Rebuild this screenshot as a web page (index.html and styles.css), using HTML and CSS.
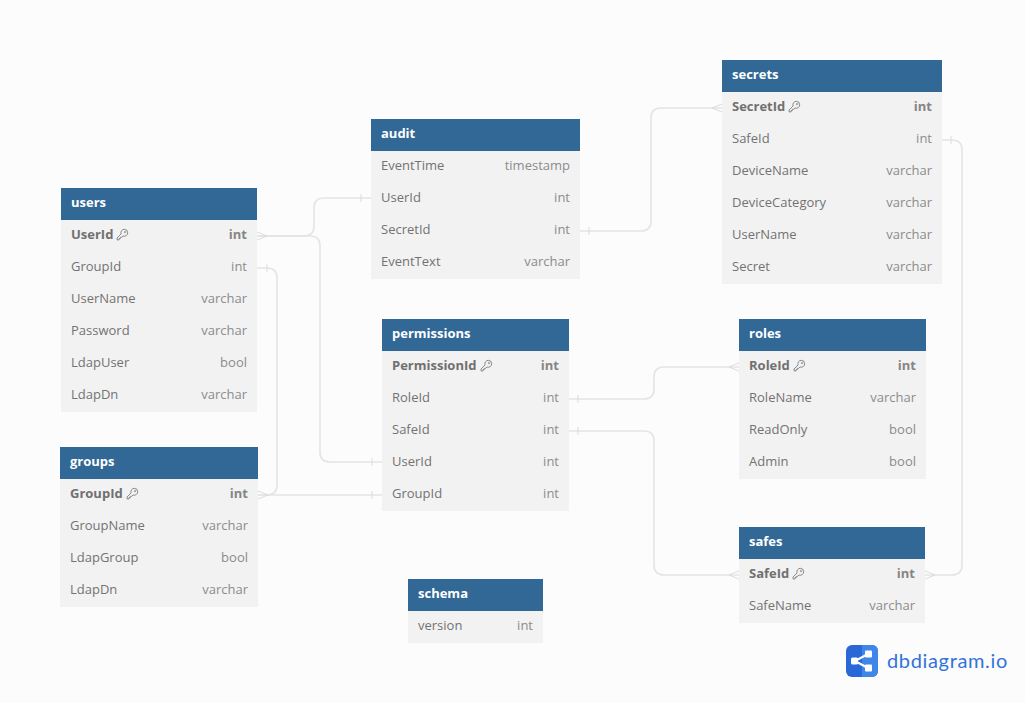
FILE: index.html
```html
<!DOCTYPE html>
<html lang="en">
<head>
<meta charset="utf-8">
<title>dbdiagram</title>
<link rel="stylesheet" href="styles.css">
</head>
<body>
<main class="canvas">
<svg class="links" width="1025" height="703" viewBox="0 0 1025 703" fill="none">
  <g class="link">
    <path d="M257 236H304Q314 236 314 226V208Q314 198 324 198H371"/>
    <path d="M257 236H310Q320 236 320 246V452Q320 462 330 462H382"/>
    <path d="M257 268H267Q277 268 277 278V485Q277 495 267 495H258"/>
    <path d="M258 495H382"/>
    <path d="M580 231H641Q651 231 651 221V118Q651 108 661 108H722"/>
    <path d="M569 399H644Q654 399 654 389V377Q654 367 664 367H739"/>
    <path d="M569 431H644Q654 431 654 441V565Q654 575 664 575H739"/>
    <path d="M942 140H952Q962 140 962 150V565Q962 575 952 575H925"/>
  </g>
  <g class="mark">
    <path d="M361 194V202M372 458V466M372 491V499M267 264V272M589 227V235M578 395V403M578 427V435M951 136V144"/>
    <path d="M257 232L267 236L257 240M258 491L268 495L258 499M925 571L935 575L925 579"/>
    <path d="M722 104L712 108L722 112M739 363L729 367L739 371M739 571L729 575L739 579"/>
  </g>
</svg>

<section class="table t-users">
  <h2>users</h2>
  <div class="row pk"><span class="name">UserId<svg class="key" viewBox="0 0 12 12"><use href="#key"/></svg></span><span class="type">int</span></div>
  <div class="row"><span class="name">GroupId</span><span class="type">int</span></div>
  <div class="row"><span class="name">UserName</span><span class="type">varchar</span></div>
  <div class="row"><span class="name">Password</span><span class="type">varchar</span></div>
  <div class="row"><span class="name">LdapUser</span><span class="type">bool</span></div>
  <div class="row"><span class="name">LdapDn</span><span class="type">varchar</span></div>
</section>

<section class="table t-groups">
  <h2>groups</h2>
  <div class="row pk"><span class="name">GroupId<svg class="key" viewBox="0 0 12 12"><use href="#key"/></svg></span><span class="type">int</span></div>
  <div class="row"><span class="name">GroupName</span><span class="type">varchar</span></div>
  <div class="row"><span class="name">LdapGroup</span><span class="type">bool</span></div>
  <div class="row"><span class="name">LdapDn</span><span class="type">varchar</span></div>
</section>

<section class="table t-audit">
  <h2>audit</h2>
  <div class="row"><span class="name">EventTime</span><span class="type">timestamp</span></div>
  <div class="row"><span class="name">UserId</span><span class="type">int</span></div>
  <div class="row"><span class="name">SecretId</span><span class="type">int</span></div>
  <div class="row"><span class="name">EventText</span><span class="type">varchar</span></div>
</section>

<section class="table t-permissions">
  <h2>permissions</h2>
  <div class="row pk"><span class="name">PermissionId<svg class="key" viewBox="0 0 12 12"><use href="#key"/></svg></span><span class="type">int</span></div>
  <div class="row"><span class="name">RoleId</span><span class="type">int</span></div>
  <div class="row"><span class="name">SafeId</span><span class="type">int</span></div>
  <div class="row"><span class="name">UserId</span><span class="type">int</span></div>
  <div class="row"><span class="name">GroupId</span><span class="type">int</span></div>
</section>

<section class="table t-secrets">
  <h2>secrets</h2>
  <div class="row pk"><span class="name">SecretId<svg class="key" viewBox="0 0 12 12"><use href="#key"/></svg></span><span class="type">int</span></div>
  <div class="row"><span class="name">SafeId</span><span class="type">int</span></div>
  <div class="row"><span class="name">DeviceName</span><span class="type">varchar</span></div>
  <div class="row"><span class="name">DeviceCategory</span><span class="type">varchar</span></div>
  <div class="row"><span class="name">UserName</span><span class="type">varchar</span></div>
  <div class="row"><span class="name">Secret</span><span class="type">varchar</span></div>
</section>

<section class="table t-roles">
  <h2>roles</h2>
  <div class="row pk"><span class="name">RoleId<svg class="key" viewBox="0 0 12 12"><use href="#key"/></svg></span><span class="type">int</span></div>
  <div class="row"><span class="name">RoleName</span><span class="type">varchar</span></div>
  <div class="row"><span class="name">ReadOnly</span><span class="type">bool</span></div>
  <div class="row"><span class="name">Admin</span><span class="type">bool</span></div>
</section>

<section class="table t-safes">
  <h2>safes</h2>
  <div class="row pk"><span class="name">SafeId<svg class="key" viewBox="0 0 12 12"><use href="#key"/></svg></span><span class="type">int</span></div>
  <div class="row"><span class="name">SafeName</span><span class="type">varchar</span></div>
</section>

<section class="table t-schema">
  <h2>schema</h2>
  <div class="row"><span class="name">version</span><span class="type">int</span></div>
</section>

<div class="brand">
  <svg class="logo" width="32" height="32" viewBox="0 0 32 32">
    <rect width="32" height="32" rx="6" fill="#2a68d8"/>
    <path d="M16 0H26a6 6 0 0 1 6 6V26a6 6 0 0 1-6 6H16Z" fill="#3f86ea"/>
    <path d="M9 16L22 9M9 16L22 23" stroke="#fff" stroke-width="2" fill="none"/>
    <rect x="5" y="12.5" width="7" height="7" rx="1.5" fill="#fff"/>
    <rect x="19" y="5.5" width="7" height="7" rx="1" fill="#fff"/>
    <rect x="19" y="19.5" width="7" height="7" rx="1" fill="#fff"/>
  </svg>
  <span class="brand-text">dbdiagram.io</span>
</div>

<svg class="defs" width="0" height="0">
  <symbol id="key" viewBox="0 0 12 12">
    <path d="M7.6 1.2a3.2 3.2 0 0 1 3.2 3.2 3.2 3.2 0 0 1-4.3 3L5.2 8.6H4v1.2H2.8V11H1v-1.8l3.7-3.7a3.2 3.2 0 0 1 2.9-4.3Z" fill="none" stroke="#777" stroke-width=".8" stroke-linejoin="round"/>
    <circle cx="8.3" cy="3.8" r=".7" fill="none" stroke="#777" stroke-width=".6"/>
  </symbol>
</svg>
</main>
</body>
</html>
```
FILE: styles.css
```css
* { box-sizing: border-box; }
html, body { margin: 0; padding: 0; }
body {
  background: #fcfcfc;
  font-family: "Open Sans", "Noto Sans", sans-serif;
  overflow: hidden;
}
.canvas { position: relative; width: 1025px; height: 703px; }
.links { position: absolute; left: 0; top: 0; }
.link path { stroke: #e4e4e4; stroke-width: 1.6; }
.mark path { stroke: #dcdcdc; stroke-width: 1; }
.defs { position: absolute; }

.table { position: absolute; background: #f2f2f2; }
.table h2 {
  margin: 0;
  height: 32px;
  padding: 0 10px;
  background: #316896;
  color: #fff;
  font-size: 13px;
  font-weight: 700;
  line-height: 28px;
}
.row {
  display: flex;
  justify-content: space-between;
  align-items: center;
  height: 32px;
  padding: 0 10px 4px;
  font-size: 13px;
  color: #727272;
}
.name { display: flex; align-items: center; }
.type { color: #8c8c8c; }
.pk .name { font-weight: 700; color: #707070; }
.pk .type { font-weight: 700; color: #858585; }
.key { width: 13px; height: 13px; margin-left: 3px; }

.t-users { left: 61px; top: 188px; width: 196px; }
.t-groups { left: 60px; top: 447px; width: 198px; }
.t-audit { left: 371px; top: 119px; width: 209px; }
.t-permissions { left: 382px; top: 319px; width: 187px; }
.t-secrets { left: 722px; top: 60px; width: 220px; }
.t-roles { left: 739px; top: 319px; width: 187px; }
.t-safes { left: 739px; top: 527px; width: 186px; }
.t-schema { left: 408px; top: 579px; width: 135px; }

.brand { position: absolute; left: 846px; top: 645px; display: flex; align-items: center; gap: 9px; }
.brand-text { font-family: "Lato", sans-serif; font-size: 20px; line-height: 30px; margin-top: -2px; color: #3273d9; letter-spacing: .65px; }
```
